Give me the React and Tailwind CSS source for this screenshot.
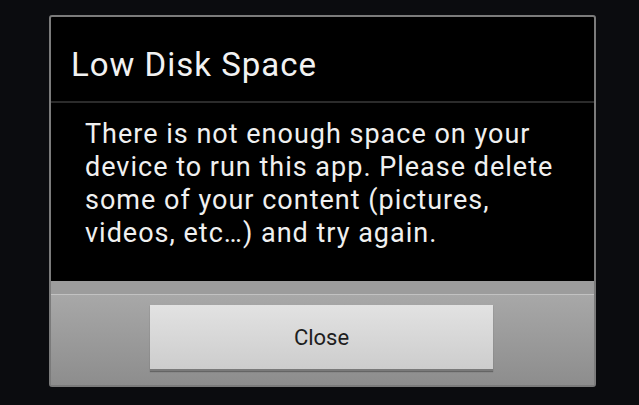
export default function App() {
  return (
    <div
      className="w-[639px] h-[405px] bg-[#0b0c0f] pl-[49px] pt-[15px] overflow-hidden"
      style={{ fontFamily: 'Roboto, "Noto Sans", sans-serif' }}
    >
      <div className="w-[547px] border-2 border-[#7b7b7b] rounded-[3px] bg-black flex flex-col">
        <div className="pl-[20px] pt-[31px] pb-[20px] text-[33px] leading-[33px] tracking-[1px] text-[#f2f2f2] whitespace-nowrap">
          Low Disk Space
        </div>
        <div className="h-[2px] bg-[#2b2b2b]" />
        <div className="pl-[34px] pt-[15px] pb-[31px] text-[27px] leading-[33px] tracking-[1px] text-[#f0f0f0] whitespace-nowrap">
          There is not enough space on your
          <br />
          device to run this app. Please delete
          <br />
          some of your content (pictures,
          <br />
          videos, etc…) and try again.
        </div>
        <div className="flex flex-col bg-gradient-to-b from-[#acacac] to-[#8d8d8d]">
          <div className="h-[13px] bg-[#9c9c9c]" />
          <div className="h-px bg-[#c2c2c2]" />
          <div className="pt-[10px] pb-[14px] pl-[99px]">
            <div className="w-[343px] h-[66px] flex items-center justify-center bg-gradient-to-b from-[#e2e2e2] to-[#cdcdcd] border-b-2 border-[#7a7a7a] shadow-[0_1px_1px_rgba(0,0,0,0.3)] text-[22px] text-[#1e1e1e]">
              Close
            </div>
          </div>
        </div>
      </div>
    </div>
  );
}
